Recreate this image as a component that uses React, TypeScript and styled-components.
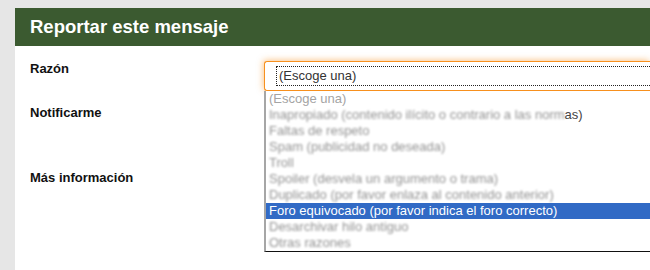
import React from "react";
import styled, { createGlobalStyle } from "styled-components";

const GlobalStyle = createGlobalStyle`
  html, body {
    margin: 0;
    padding: 0;
    overflow: hidden;
    background: #e6e6e6;
    font-family: "Liberation Sans", Arial, sans-serif;
  }
`;

type Reason = { text: string; tail?: string };

const reasons: Reason[] = [
  { text: "(Escoge una)" },
  { text: "Inapropiado (contenido ilícito o contrario a las norm", tail: "as)" },
  { text: "Faltas de respeto" },
  { text: "Spam (publicidad no deseada)" },
  { text: "Troll" },
  { text: "Spoiler (desvela un argumento o trama)" },
  { text: "Duplicado (por favor enlaza al contenido anterior)" },
  { text: "Foro equivocado (por favor indica el foro correcto)" },
  { text: "Desarchivar hilo antiguo" },
  { text: "Otras razones" },
];

const ACTIVE = 7;

export default function App() {
  return (
    <>
      <GlobalStyle />
      <Page>
        <Dialog>
          <Header>Reportar este mensaje</Header>
          <Form>
            <Row $height={30}>
              <Label>Razón</Label>
              <SelectWrap>
                <SelectBox>
                  <FocusRing>(Escoge una)</FocusRing>
                </SelectBox>
                <Options>
                  {reasons.map((r, i) => (
                    <Option key={r.text} $active={i === ACTIVE} $first={i === 0}>
                      <Faded $sharp={i === ACTIVE || i === 0}>{r.text}</Faded>
                      {r.tail && <Tail>{r.tail}</Tail>}
                    </Option>
                  ))}
                </Options>
              </SelectWrap>
            </Row>
            <Row $height={50} $gap={14}>
              <Label>Notificarme</Label>
            </Row>
            <Row $height={60} $gap={15}>
              <Label>Más información</Label>
            </Row>
          </Form>
        </Dialog>
      </Page>
    </>
  );
}

const Page = styled.div`
  width: 650px;
  height: 270px;
  padding: 8px 0 0 15px;
  box-sizing: border-box;
  display: flex;
`;

const Dialog = styled.div`
  flex: 1;
  height: 262px;
  background: #ffffff;
  overflow: hidden;
`;

const Header = styled.div`
  height: 38px;
  background: #3b5a30;
  color: #ffffff;
  font-size: 18.5px;
  font-weight: bold;
  line-height: 38px;
  padding-left: 15px;
`;

const Form = styled.div`
  display: flex;
  flex-direction: column;
  padding: 15px 0 0 15px;
`;

const Row = styled.div<{ $height: number; $gap?: number }>`
  display: grid;
  grid-template-columns: 234px 1fr;
  height: ${(p) => p.$height}px;
  margin-top: ${(p) => p.$gap ?? 0}px;
`;

const Label = styled.div`
  font-size: 13px;
  font-weight: bold;
  color: #111;
  line-height: 15px;
`;

const SelectWrap = styled.div`
  position: relative;
  z-index: 2;
`;

const SelectBox = styled.div`
  height: 30px;
  box-sizing: border-box;
  border: 1.5px solid #f7901e;
  border-right: none;
  border-radius: 3px 0 0 3px;
  box-shadow: -1px -1px 6px rgba(247, 144, 30, 0.5);
  display: flex;
  align-items: center;
  padding-left: 11px;
  background: #fff;
`;

const FocusRing = styled.div`
  flex: 1;
  height: 20px;
  box-sizing: border-box;
  border: 1px dotted #222;
  border-right: none;
  padding-left: 2px;
  font-size: 13px;
  line-height: 18px;
  color: #333;
`;

const Options = styled.div`
  position: absolute;
  top: 30px;
  left: 0;
  right: 0;
  background: #fff;
  border-left: 2px solid #a6a6a6;
  border-bottom: 1px solid #111;
`;

const Option = styled.div<{ $active: boolean; $first: boolean }>`
  height: 16px;
  line-height: 16px;
  padding-left: 3px;
  font-size: 13px;
  white-space: nowrap;
  background: ${(p) => (p.$active ? "#316ac5" : "transparent")};
  color: ${(p) => (p.$active ? "#ffffff" : p.$first ? "#a4a4a4" : "#939393")};
`;

const Faded = styled.span<{ $sharp: boolean }>`
  display: inline-block;
  filter: ${(p) => (p.$sharp ? "none" : "blur(0.8px)")};
`;

const Tail = styled.span`
  color: #444;
`;
